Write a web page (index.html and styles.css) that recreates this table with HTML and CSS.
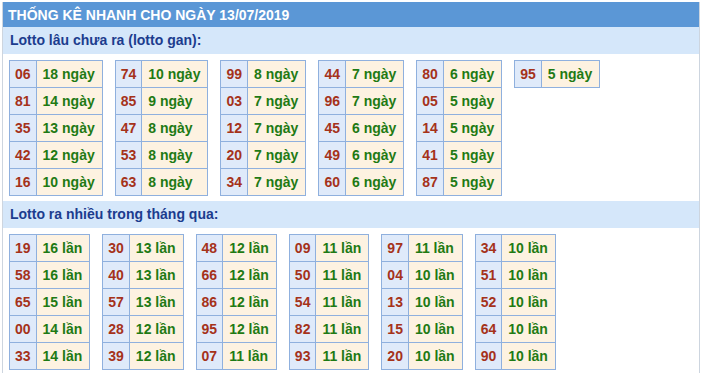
FILE: index.html
```html
<!DOCTYPE html>
<html lang="vi">
<head>
<meta charset="utf-8">
<title>Thống kê nhanh</title>
<link rel="stylesheet" href="styles.css">
</head>
<body>
<div class="box">
  <div class="title">THỐNG KÊ NHANH CHO NGÀY 13/07/2019</div>
  <div class="sub">Lotto lâu chưa ra (lotto gan):</div>
  <div class="tables">
    <table class="t"><tr><td class="n">06</td><td class="v">18 ngày</td></tr><tr><td class="n">81</td><td class="v">14 ngày</td></tr><tr><td class="n">35</td><td class="v">13 ngày</td></tr><tr><td class="n">42</td><td class="v">12 ngày</td></tr><tr><td class="n">16</td><td class="v">10 ngày</td></tr></table>
    <table class="t"><tr><td class="n">74</td><td class="v">10 ngày</td></tr><tr><td class="n">85</td><td class="v">9 ngày</td></tr><tr><td class="n">47</td><td class="v">8 ngày</td></tr><tr><td class="n">53</td><td class="v">8 ngày</td></tr><tr><td class="n">63</td><td class="v">8 ngày</td></tr></table>
    <table class="t"><tr><td class="n">99</td><td class="v">8 ngày</td></tr><tr><td class="n">03</td><td class="v">7 ngày</td></tr><tr><td class="n">12</td><td class="v">7 ngày</td></tr><tr><td class="n">20</td><td class="v">7 ngày</td></tr><tr><td class="n">34</td><td class="v">7 ngày</td></tr></table>
    <table class="t"><tr><td class="n">44</td><td class="v">7 ngày</td></tr><tr><td class="n">96</td><td class="v">7 ngày</td></tr><tr><td class="n">45</td><td class="v">6 ngày</td></tr><tr><td class="n">49</td><td class="v">6 ngày</td></tr><tr><td class="n">60</td><td class="v">6 ngày</td></tr></table>
    <table class="t"><tr><td class="n">80</td><td class="v">6 ngày</td></tr><tr><td class="n">05</td><td class="v">5 ngày</td></tr><tr><td class="n">14</td><td class="v">5 ngày</td></tr><tr><td class="n">41</td><td class="v">5 ngày</td></tr><tr><td class="n">87</td><td class="v">5 ngày</td></tr></table>
    <table class="t"><tr><td class="n">95</td><td class="v">5 ngày</td></tr></table>
  </div>
  <div class="sub">Lotto ra nhiều trong tháng qua:</div>
  <div class="tables">
    <table class="t"><tr><td class="n">19</td><td class="v">16 lần</td></tr><tr><td class="n">58</td><td class="v">16 lần</td></tr><tr><td class="n">65</td><td class="v">15 lần</td></tr><tr><td class="n">00</td><td class="v">14 lần</td></tr><tr><td class="n">33</td><td class="v">14 lần</td></tr></table>
    <table class="t"><tr><td class="n">30</td><td class="v">13 lần</td></tr><tr><td class="n">40</td><td class="v">13 lần</td></tr><tr><td class="n">57</td><td class="v">13 lần</td></tr><tr><td class="n">28</td><td class="v">12 lần</td></tr><tr><td class="n">39</td><td class="v">12 lần</td></tr></table>
    <table class="t"><tr><td class="n">48</td><td class="v">12 lần</td></tr><tr><td class="n">66</td><td class="v">12 lần</td></tr><tr><td class="n">86</td><td class="v">12 lần</td></tr><tr><td class="n">95</td><td class="v">12 lần</td></tr><tr><td class="n">07</td><td class="v">11 lần</td></tr></table>
    <table class="t"><tr><td class="n">09</td><td class="v">11 lần</td></tr><tr><td class="n">50</td><td class="v">11 lần</td></tr><tr><td class="n">54</td><td class="v">11 lần</td></tr><tr><td class="n">82</td><td class="v">11 lần</td></tr><tr><td class="n">93</td><td class="v">11 lần</td></tr></table>
    <table class="t"><tr><td class="n">97</td><td class="v">11 lần</td></tr><tr><td class="n">04</td><td class="v">10 lần</td></tr><tr><td class="n">13</td><td class="v">10 lần</td></tr><tr><td class="n">15</td><td class="v">10 lần</td></tr><tr><td class="n">20</td><td class="v">10 lần</td></tr></table>
    <table class="t"><tr><td class="n">34</td><td class="v">10 lần</td></tr><tr><td class="n">51</td><td class="v">10 lần</td></tr><tr><td class="n">52</td><td class="v">10 lần</td></tr><tr><td class="n">64</td><td class="v">10 lần</td></tr><tr><td class="n">90</td><td class="v">10 lần</td></tr></table>
  </div>
</div>
</body>
</html>
```
FILE: styles.css
```css
html, body {
  margin: 0;
  padding: 0;
  background: #ffffff;
}
body {
  font-family: "Liberation Sans", Arial, sans-serif;
  padding: 2px 2px 0 2px;
}
.box {
  width: 696px;
  border: 1px solid #cdd5df;
  border-top: 0;
  min-height: 380px;
}
.title {
  height: 25px;
  line-height: 26px;
  background: #5b97d6;
  color: #ffffff;
  font-size: 14px;
  font-weight: bold;
  padding-left: 5px;
}
.sub {
  height: 27px;
  line-height: 27px;
  background: #d5e7fa;
  color: #1c3c8e;
  font-size: 14px;
  font-weight: bold;
  padding-left: 7px;
}
.tables {
  display: flex;
  align-items: flex-start;
  gap: 12px;
  padding: 6px 6px 5px 6px;
}
.t {
  border-collapse: collapse;
  font-size: 14px;
  font-weight: bold;
}
.t td {
  border: 1px solid #8fb0de;
  height: 26px;
  white-space: nowrap;
}
.t .n {
  background: #dfeafa;
  color: #a5321a;
  padding: 0 5px;
}
.t .v {
  background: #fdf2e1;
  color: #1f7a14;
  padding: 0 7px 0 6px;
}
```
